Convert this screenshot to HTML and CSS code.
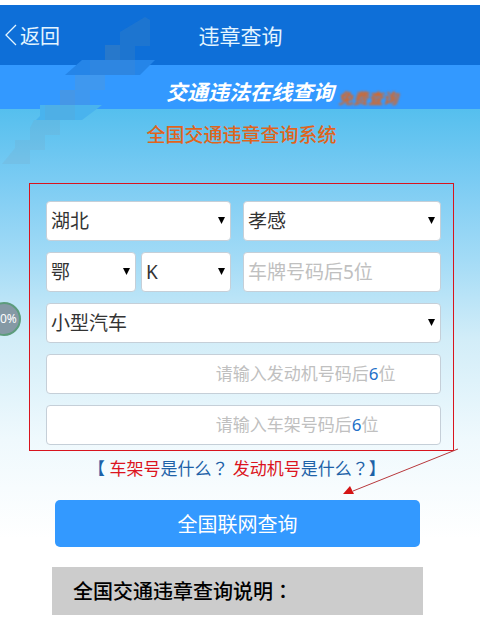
FILE: index.html
```html
<!DOCTYPE html>
<html lang="zh-CN">
<head>
    <meta charset="UTF-8">
    <meta name="viewport" content="width=device-width, initial-scale=1.0">
    <title>违章查询</title>
    <link rel="stylesheet" href="styles.css">
</head>
<body>

    <header class="navbar">
        <a class="back" href="#">
            <svg class="back-icon" width="12" height="22" viewBox="0 0 12 22"><path d="M11 1 L1 11 L11 21" fill="none" stroke="#e4f5ff" stroke-width="1.3"/></svg>返回
        </a>
        <h1>违章查询</h1>
    </header>

    <div class="banner">
        <span class="banner-title">交通违法在线查询</span>
        <span class="banner-tag">免费查询</span>
    </div>

    <!-- Pixel ribbon over the header -->
    <svg class="ribbon" width="160" height="170" viewBox="0 0 160 170">
        <path d="M82 60 H155 L140 75 H65 Z" fill="#2585e8"/>
        <path d="M40 105 H102 L82 120 H36 L40 116 Z" fill="#49b3ee"/>
        <g fill="#7c97a8">
            <path d="M120 32 L145 17 L150 20 V46 H135 V60 H105 V45 H120 Z" opacity=".15"/>
            <path d="M105 45 H120 V60 H135 V75 H90 V60 H105 Z" opacity=".1"/>
            <path d="M75 75 H105 V90 H90 V105 H60 V90 H75 Z" opacity=".18"/>
            <path d="M60 90 H75 V120 H45 V105 H60 Z" opacity=".1"/>
            <path d="M34 120 H60 V135 H45 V150 H30 V164 H2 L15 148 V140 H30 V128 Z" opacity=".14"/>
        </g>
    </svg>

    <main>
        <h2>全国交通违章查询系统</h2>

        <form>
            <div class="frame">
                <div class="row">
                    <div class="left">
                        <div class="select">
                            <select aria-label="省份"><option>湖北</option></select>
                        </div>
                    </div>
                    <div class="right">
                        <div class="select">
                            <select aria-label="城市"><option>孝感</option></select>
                        </div>
                    </div>
                </div>
                <div class="row">
                    <div class="left">
                        <div class="select">
                            <select aria-label="车牌省份"><option>鄂</option></select>
                        </div>
                        <div class="select">
                            <select aria-label="车牌字母"><option>K</option></select>
                        </div>
                    </div>
                    <div class="right">
                        <input type="text" aria-label="车牌号码" placeholder="车牌号码后5位">
                    </div>
                </div>
                <div class="row">
                    <div class="select">
                        <select aria-label="车辆类型"><option>小型汽车</option></select>
                    </div>
                </div>
                <div class="row hinted">
                    <input type="text" id="engine">
                    <label class="hint" for="engine">请输入发动机号码后<b>6</b>位</label>
                </div>
                <div class="row hinted">
                    <input type="text" id="vin">
                    <label class="hint" for="vin">请输入车架号码后<b>6</b>位</label>
                </div>

                <svg class="arrow" width="116" height="48" viewBox="0 0 116 48">
                    <path d="M115 1 L10 43" stroke="#b8383c" stroke-width="1"/>
                    <path d="M0 46 L7 38 L11 46 Z" fill="#d41414"/>
                </svg>
            </div>

            <p class="help">【 <a href="#"><em>车架号</em>是什么<span class="punct" lang="zh-TW">？</span></a> <a href="#"><em>发动机号</em>是什么<span class="punct" lang="zh-TW">？</span></a>】</p>

            <button type="submit" class="submit">全国联网查询</button>
        </form>

        <h3>全国交通违章查询说明<span class="punct" lang="zh-TW">：</span></h3>
    </main>

    <div class="progress">0%</div>

</body>
</html>
```
FILE: styles.css
```css
* {
    box-sizing: border-box;
}
body {
    margin: 0;
    padding-top: 5px;
    background-color: #fff;
    font-family: "Noto Sans", "Noto Sans CJK SC", sans-serif;
    color: #333;
}
a {
    color: inherit;
    text-decoration: none;
}
.punct {
    font-family: "Noto Sans CJK TC", sans-serif;
}
.navbar {
    display: grid;
    grid-template-columns: 1fr auto 1fr;
    align-items: center;
    height: 60px;
    padding: 0 4px 0 5px;
    background-color: #0e6fd8;
    color: #e4f5ff;
}
.navbar .back {
    display: flex;
    align-items: center;
    gap: 3px;
    font-size: 20px;
}
.navbar h1 {
    margin: 0;
    font-size: 21px;
    font-weight: 400;
}
.banner {
    display: flex;
    justify-content: center;
    align-items: center;
    gap: 4px;
    height: 44px;
    padding: 8px 0 0 84px;
    background-color: #3399ff;
    font-style: italic;
    font-weight: 700;
    white-space: nowrap;
}
.banner-title {
    font-size: 21px;
    color: #fff;
}
.banner-tag {
    padding-top: 13px;
    font-size: 15px;
    color: #e0641c;
    filter: blur(1px);
}
.ribbon {
    position: absolute;
    top: 0;
    left: 0;
    pointer-events: none;
}

main {
    padding: 0 26px 8px 29px;
    background: linear-gradient(#55bfee, #7acbf3 70px, #a3dbf6 150px, #d2edf8 230px, #eff9fd 330px, #fff 430px);
}
h2 {
    margin: 0;
    padding: 12px 0 0;
    font-size: 19px;
    line-height: 28px;
    font-weight: 500;
    text-align: center;
    color: #e0641c;
}
.frame {
    position: relative;
    display: flex;
    flex-direction: column;
    gap: 11px;
    margin-top: 34px;
    padding: 17px 12px 5px 16px;
    border: 1px solid #d8141e;
}
.row {
    display: flex;
    gap: 12px;
}
.left {
    display: flex;
    flex: 185 1 0;
    gap: 5px;
}
.right {
    display: flex;
    flex: 198 1 0;
}
.select {
    position: relative;
    flex: 1;
}
.select::after {
    content: "";
    position: absolute;
    top: 16px;
    right: 6px;
    width: 7px;
    height: 7px;
    background-color: #000;
    clip-path: polygon(0 0, 100% 0, 50% 100%);
    pointer-events: none;
}
select, input {
    width: 100%;
    height: 40px;
    margin: 0;
    padding: 0 4px;
    border: 1px solid #c5cfd8;
    border-radius: 4px;
    background-color: #fff;
    font-family: inherit;
    font-size: 19px;
    color: #333;
    appearance: none;
}
input::placeholder {
    color: #c0c0c0;
    opacity: 1;
}
.hinted {
    position: relative;
}
.hint {
    position: absolute;
    top: 0;
    left: 43%;
    font-size: 17px;
    line-height: 40px;
    color: #c0c0c0;
    white-space: nowrap;
}
.hint b {
    font-weight: 400;
    color: #2470c8;
}
.arrow {
    position: absolute;
    right: -6px;
    bottom: -46px;
}

.help {
    margin: 4px 0 0;
    padding-left: 59px;
    font-size: 17px;
    line-height: 26px;
    color: #1d62a8;
    white-space: nowrap;
}
.help em {
    font-style: normal;
    color: #dc1420;
}
.submit {
    display: block;
    width: calc(100% - 60px);
    height: 47px;
    margin: 18px 0 0 26px;
    border: 0;
    border-radius: 5px;
    background-color: #3399ff;
    font-family: inherit;
    font-size: 20px;
    color: #fff;
    cursor: pointer;
}
h3 {
    margin: 20px 31px 0 23px;
    padding-left: 21px;
    background-color: #ccc;
    font-size: 20px;
    line-height: 47px;
    font-weight: 500;
    color: #000;
}

.progress {
    position: absolute;
    top: 302px;
    left: -13px;
    width: 34px;
    height: 34px;
    padding-left: 11px;
    border: 2px solid #5c9c7c;
    border-radius: 50%;
    background-color: #8599a5;
    font-size: 12px;
    line-height: 30px;
    color: #fff;
}
```
